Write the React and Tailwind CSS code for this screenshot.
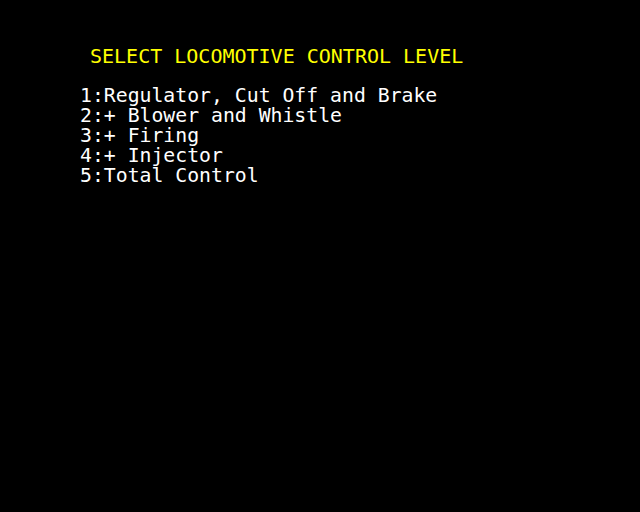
const options = [
  '1:Regulator, Cut Off and Brake',
  '2:+ Blower and Whistle',
  '3:+ Firing',
  '4:+ Injector',
  '5:Total Control',
];

export default function App() {
  return (
    <div
      className="w-[640px] h-[512px] bg-black overflow-hidden text-[19.8px] leading-[20px] whitespace-pre"
      style={{ fontFamily: '"DejaVu Sans Mono", "Liberation Mono", monospace' }}
    >
      <div className="pt-[46px] pl-[90px] text-[20px] text-[#ffff00]">SELECT LOCOMOTIVE CONTROL LEVEL</div>
      <div className="pt-[20px] pl-[80px] text-white">
        {options.map((o) => (
          <div key={o}>{o}</div>
        ))}
      </div>
    </div>
  );
}
